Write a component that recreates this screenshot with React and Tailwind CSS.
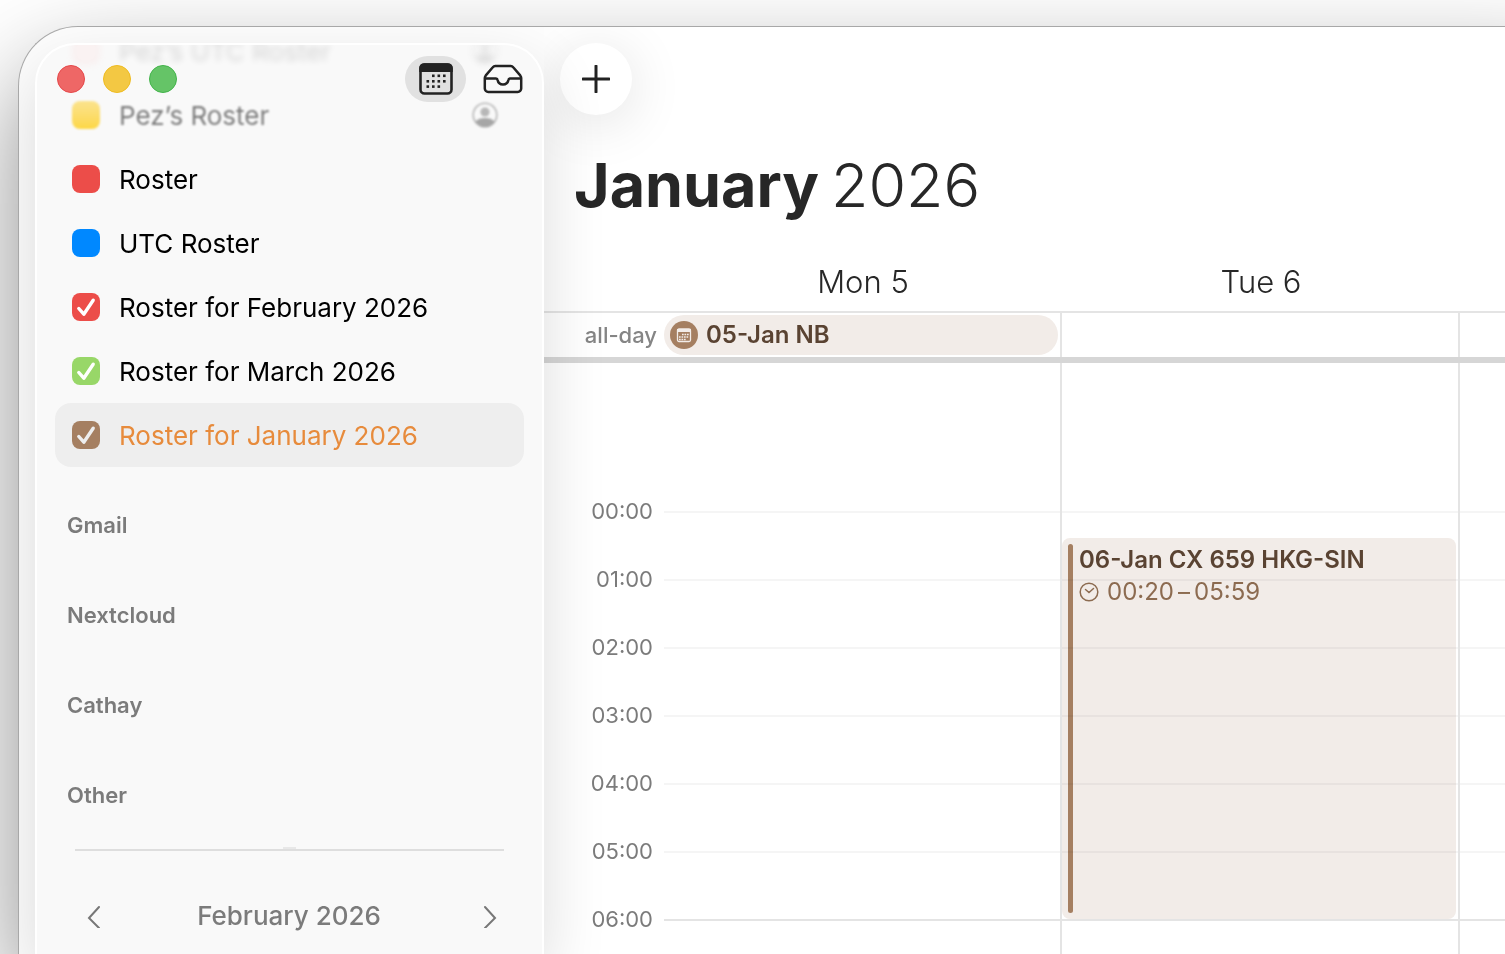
import React from "react";

const calendars = [
  { name: "Pez’s UTC Roster", box: "bg-red-200", row: "blur-[3px] opacity-15", shared: true },
  { name: "Pez’s Roster", box: "bg-linear-to-b from-[#fbe38d] to-[#fdd744]", row: "blur-[1px] opacity-50", boxRow: true, shared: true },
  { name: "Roster", box: "bg-[#ec4d49]" },
  { name: "UTC Roster", box: "bg-[#0088ff]" },
  { name: "Roster for February 2026", box: "bg-[#ec4d49]", checked: true },
  { name: "Roster for March 2026", box: "bg-[#98d768]", checked: true },
  { name: "Roster for January 2026", box: "bg-[#a57f61]", checked: true, selected: true },
];

const accounts = ["Gmail", "Nextcloud", "Cathay", "Other"];

const hours = ["00:00", "01:00", "02:00", "03:00", "04:00", "05:00", "06:00"];

const days = [
  { id: 5, label: "Mon 5", allDay: "05-Jan NB" },
  { id: 6, label: "Tue 6", event: { title: "06-Jan CX 659 HKG-SIN", start: "00:20", end: "05:59" } },
  { id: 7 },
];

const CalendarIcon = () => (
  <svg width="34" height="32" viewBox="0 0 34 32" fill="none" aria-hidden="true">
    <rect x="1.5" y="1.5" width="31" height="29" rx="4" stroke="#222" strokeWidth="2.6" />
    <path d="M.2 9V5A4.800 4.800 0 0 1 5 .2h24A4.800 4.800 0 0 1 33.800 5v4z" fill="#222" />
    <g fill="#222">
      {[13, 18.5, 24].map((x) => (
        <rect key={x} x={x} y="11.500" width="2.600" height="2.600" />
      ))}
      {[7.5, 13, 18.5, 24].map((x) => (
        <rect key={x} x={x} y="17" width="2.600" height="2.600" />
      ))}
      {[7.5, 13, 18.5].map((x) => (
        <rect key={x} x={x} y="22.300" width="2.600" height="2.600" />
      ))}
    </g>
  </svg>
);

const TrayIcon = () => (
  <svg width="40" height="30" viewBox="0 0 40 30" fill="none" stroke="#222" strokeWidth="2.5" strokeLinejoin="round" aria-hidden="true">
    <path d="M1.800 14v10.500a3.500 3.500 0 0 0 3.500 3.500h29.400a3.500 3.500 0 0 0 3.500-3.500V14c0-1-.4-1.800-1-2.600l-7-8.200A3.200 3.200 0 0 0 27.700 2H12.300a3.200 3.200 0 0 0-2.500 1.200l-7 8.200c-.6.800-1 1.600-1 2.600z" />
    <path d="M2 14.500h11c1 0 1.500.6 1.600 1.500a5.500 5.500 0 0 0 10.800 0c.1-.9.600-1.500 1.600-1.500h11" />
  </svg>
);

const PersonIcon = () => (
  <svg width="26" height="26" viewBox="0 0 26 26" fill="none" aria-hidden="true">
    <circle cx="13" cy="13" r="11.800" stroke="#777" strokeWidth="1.600" />
    <circle cx="13" cy="10" r="4.600" fill="#777" />
    <path d="M3.500 19.500C5.500 17 9 16 13 16s7.500 1 9.500 3.500C20.500 23 17 25 13 25s-7.500-2-9.500-5.500z" fill="#555" />
  </svg>
);

const EventCalendarIcon = () => (
  <svg width="28" height="28" viewBox="0 0 28 28" aria-hidden="true">
    <circle cx="14" cy="14" r="14" fill="#a57f61" />
    <rect x="7.500" y="8" width="13" height="12.500" rx="1.500" fill="none" stroke="#f2ece8" strokeWidth="1.300" />
    <path d="M7 8h14v3H7z" fill="#f2ece8" />
    <path d="M12 13.500h7M9 16h10M9 18.500h7" stroke="#f2ece8" strokeWidth="1.500" strokeDasharray="1.700 .8" />
  </svg>
);

const ClockIcon = () => (
  <svg width="20" height="20" viewBox="0 0 20 20" fill="none" stroke="#8c6b50" strokeWidth="1.500" strokeLinecap="round" aria-hidden="true">
    <circle cx="10" cy="10" r="8.800" />
    <path d="M6.500 7.500 10 10.500l4.500-4" />
  </svg>
);

const Chevron = ({ d }) => (
  <svg width="14" height="24" viewBox="0 0 14 24" fill="none" stroke="#777" strokeWidth="2" strokeLinecap="round" aria-hidden="true">
    <path d={d} />
  </svg>
);

const CalendarRow = ({ cal }) => (
  <li className={`mx-[18px] flex h-16 items-center rounded-2xl pr-[26px] pl-[17px] ${cal.selected ? "bg-[#eeeeee]" : ""} ${cal.boxRow ? "" : cal.row || ""}`}>
    <label className={`flex flex-1 items-center gap-[19px] ${cal.selected ? "text-[#e78b3c]" : "text-black"}`}>
      <span className={`relative size-7 ${cal.boxRow ? "blur-[1px]" : ""}`}>
        <input type="checkbox" defaultChecked={cal.checked} className={`peer block size-7 appearance-none rounded-lg ${cal.box}`} />
        <svg className="pointer-events-none absolute inset-0 hidden peer-checked:block" width="28" height="28" viewBox="0 0 28 28" fill="none" stroke={cal.selected ? "#eeeeee" : "#fff"} strokeWidth="3.400" strokeLinecap="round" strokeLinejoin="round" aria-hidden="true">
          <path d="M6.800 15.500l5 5.700 9.400-14" />
        </svg>
      </span>
      <span className={`pt-[2px] text-[26px] leading-8 ${cal.boxRow ? cal.row : ""}`}>{cal.name}</span>
    </label>
    {cal.shared && (
      <span className={cal.boxRow ? cal.row : ""}>
        <PersonIcon />
      </span>
    )}
  </li>
);

const Sidebar = () => (
  <aside className="relative z-10 mt-4 ml-4 flex w-[509px] shrink-0 flex-col overflow-hidden rounded-t-[40px] border-2 border-b-0 border-white bg-[#f9f9f9] shadow-[0_24px_64px_rgba(0,0,0,0.14)]">
    <div className="absolute inset-x-0 top-0 z-10 flex h-[68px] items-center pr-[9px] pl-5">
      <div className="flex flex-1 gap-[18px]">
        <button aria-label="Close" className="size-7 rounded-full border border-[#e5484a] bg-[#ee6766]" />
        <button aria-label="Minimise" className="size-7 rounded-full border border-[#eebb20] bg-[#f3c843]" />
        <button aria-label="Zoom" className="size-7 rounded-full border border-[#42b34a] bg-[#65c467]" />
      </div>
      <div className="flex gap-[6px]">
        <button aria-label="Calendars" className="flex h-[46px] w-[61px] items-center justify-center rounded-full bg-[#e1e1e1]">
          <CalendarIcon />
        </button>
        <button aria-label="Inbox" className="flex h-[46px] w-[61px] items-center justify-center rounded-full">
          <TrayIcon />
        </button>
      </div>
    </div>

    <ul className="-mt-[26px]">
      {calendars.map((cal) => (
        <CalendarRow key={cal.name} cal={cal} />
      ))}
    </ul>

    <div className="mt-[13px] px-[30px]">
      {accounts.map((name) => (
        <h2 key={name} className="flex h-[90px] items-center text-[22px] font-semibold text-[#7b7b7b]">
          {name}
        </h2>
      ))}
    </div>

    {/* resize handle */}
    <div className="mx-[38px] flex flex-col items-center">
      <div className="mt-[7px] h-[2px] w-[13px] bg-[#e8e8e8]" />
      <div className="h-[2px] w-full bg-[#dedede]" />
    </div>

    {/* mini month */}
    <div className="flex items-center pt-[49px] pr-[45px] pl-[50px]">
      <button aria-label="Previous month">
        <Chevron d="M12 3 2 14l10 10" />
      </button>
      <h2 className="flex-1 pr-[6px] text-center text-[26px] leading-8 font-medium text-[#7b7b7b]">February 2026</h2>
      <button aria-label="Next month">
        <Chevron d="M2 3l10 11L2 24" />
      </button>
    </div>
  </aside>
);

const DayColumn = ({ day }) => (
  <div className="relative border-r-2 border-[#e4e4e4] pt-[148px]">
    {hours.map((h) => (
      <div key={h} className={`h-[68px] border-t-2 ${h === "06:00" ? "border-[#e4e4e4]" : "border-[#f5f5f5]"}`} />
    ))}
    {day.event && (
      <article className="absolute top-[175px] right-[2px] left-0 flex h-[381px] gap-[6px] rounded-lg bg-[#f2ece8] p-[6px] mix-blend-multiply">
        <div className="w-[5px] rounded-full bg-[#a57f61]" />
        <div>
          <h3 className="text-2xl leading-8 font-semibold text-[#5a4332]">{day.event.title}</h3>
          <p className="flex items-center gap-2 text-2xl leading-8 text-[#8c6b50]">
            <ClockIcon />
            <span className="flex gap-1">
              <span>{day.event.start}</span>
              <span>–</span>
              <span>{day.event.end}</span>
            </span>
          </p>
        </div>
      </article>
    )}
  </div>
);

const WeekView = () => (
  <main className="min-w-0 flex-1 overflow-hidden bg-white">
    <div className="px-4 pt-4">
      <button aria-label="New event" className="flex size-[72px] items-center justify-center rounded-full bg-white shadow-[0_8px_56px_rgba(0,0,0,0.12)]">
        <svg width="28" height="28" viewBox="0 0 28 28" stroke="#222" strokeWidth="3" strokeLinecap="round" aria-hidden="true">
          <path d="M14 1v26M1 14h26" />
        </svg>
      </button>
    </div>
    <h1 className="mt-[30px] flex gap-3 px-[30px] text-[61px] leading-[80px] whitespace-nowrap text-[#272727]">
      <span className="font-bold">January</span>
      <span className="font-[350]">2026</span>
    </h1>

    <div className="mt-[26px] grid grid-cols-[120px_repeat(3,minmax(398px,1fr))]">
      <div />
      {days.map((day) => (
        <h2 key={day.id} className="flex h-[60px] items-center justify-center pt-[2px] text-[31px] font-[350] text-[#272727]">
          {day.label}
        </h2>
      ))}
    </div>

    <div className="grid h-[52px] grid-cols-[120px_repeat(3,minmax(398px,1fr))] border-t-2 border-b-6 border-t-[#e4e4e4] border-b-[#d6d6d6]">
      <div className="flex items-center justify-end pr-[7px] text-[22px] font-medium text-[#858585]">all-day</div>
      {days.map((day) => (
        <div key={day.id} className="border-r-2 border-[#e4e4e4] py-[2px] pr-[2px]">
          {day.allDay && (
            <div className="flex h-10 items-center gap-2 rounded-full bg-[#f2ece8] pl-[6px] text-2xl font-semibold text-[#5a4332]">
              <EventCalendarIcon />
              {day.allDay}
            </div>
          )}
        </div>
      ))}
    </div>

    <div className="grid grid-cols-[120px_repeat(3,minmax(398px,1fr))]">
      <div className="pt-[114px] pr-[11px]">
        {hours.map((h) => (
          <div key={h} className="flex h-[68px] items-center justify-end text-[22px] text-[#7b7b7b]">
            {h}
          </div>
        ))}
      </div>
      {days.map((day) => (
        <DayColumn key={day.id} day={day} />
      ))}
    </div>
  </main>
);

const App = () => {
  return (
    <div className="h-screen overflow-hidden bg-white pt-[26px] pl-[18px] font-['Inter',sans-serif]">
      <div className="-mr-16 flex h-full overflow-hidden rounded-tl-[60px] border-t border-l border-[#a8a8a8] bg-[#fdfdfd] shadow-[0_44px_100px_rgba(0,0,0,0.45)]">
        <Sidebar />
        <WeekView />
      </div>
    </div>
  );
};

export default App;
